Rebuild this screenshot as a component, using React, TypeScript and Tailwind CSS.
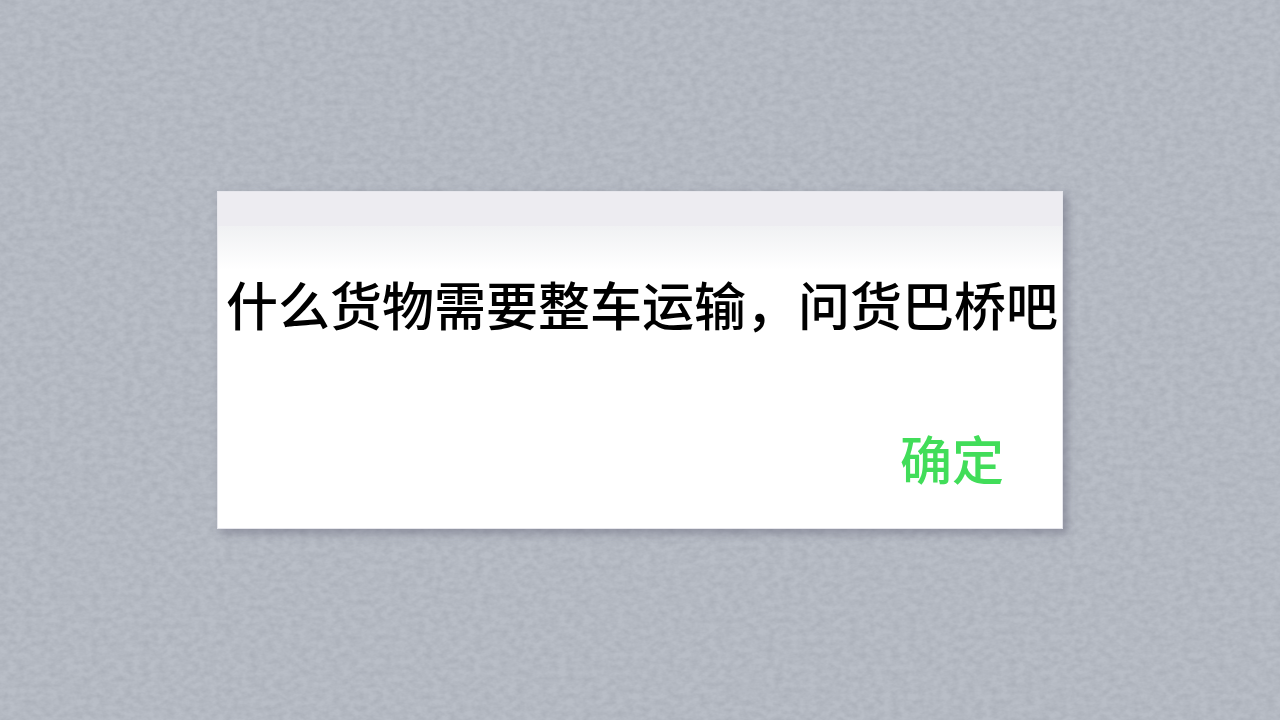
function PaperTexture() {
  return (
    <svg className="absolute inset-0 w-full h-full" aria-hidden="true">
      <filter id="paper" x="0" y="0" width="100%" height="100%" colorInterpolationFilters="sRGB">
        <feTurbulence type="fractalNoise" baseFrequency="0.12 0.17" numOctaves="3" seed="8" />
        {/* keep one channel as a faint dark speckle */}
        <feColorMatrix values="0 0 0 0 0.5  0 0 0 0 0.52  0 0 0 0 0.56  0.4 0 0 0 -0.11" />
      </filter>
      <rect width="100%" height="100%" filter="url(#paper)" />
    </svg>
  )
}

interface DialogProps {
  message: string
  confirmText: string
}

function Dialog({ message, confirmText }: DialogProps) {
  return (
    <div
      role="alertdialog"
      aria-labelledby="dialog-message"
      className="relative w-full max-w-[846px] bg-white border border-[#e6e6ec] shadow-[4px_4px_8px_1px_rgba(100,100,120,0.45)]"
    >
      <div className="h-[34px] bg-[#edecf1]" />
      <div className="h-11 bg-linear-to-b from-[#f0f1f3] to-white" />

      <p
        id="dialog-message"
        className="pl-1 text-center text-[52px] leading-[68px] font-medium text-black min-[900px]:whitespace-nowrap"
      >
        {message}
      </p>

      <div className="flex justify-end pt-[86px] pr-[58px] pb-9">
        <button type="button" className="text-[52px] leading-[68px] font-medium text-[#41dd59]">
          {confirmText}
        </button>
      </div>
    </div>
  )
}

export default function App() {
  return (
    <main className="relative flex min-h-screen items-center justify-center bg-[#b9bec7] font-['Noto_Sans_CJK_SC',sans-serif]">
      <PaperTexture />
      <Dialog message="什么货物需要整车运输，问货巴桥吧" confirmText="确定" />
    </main>
  )
}
